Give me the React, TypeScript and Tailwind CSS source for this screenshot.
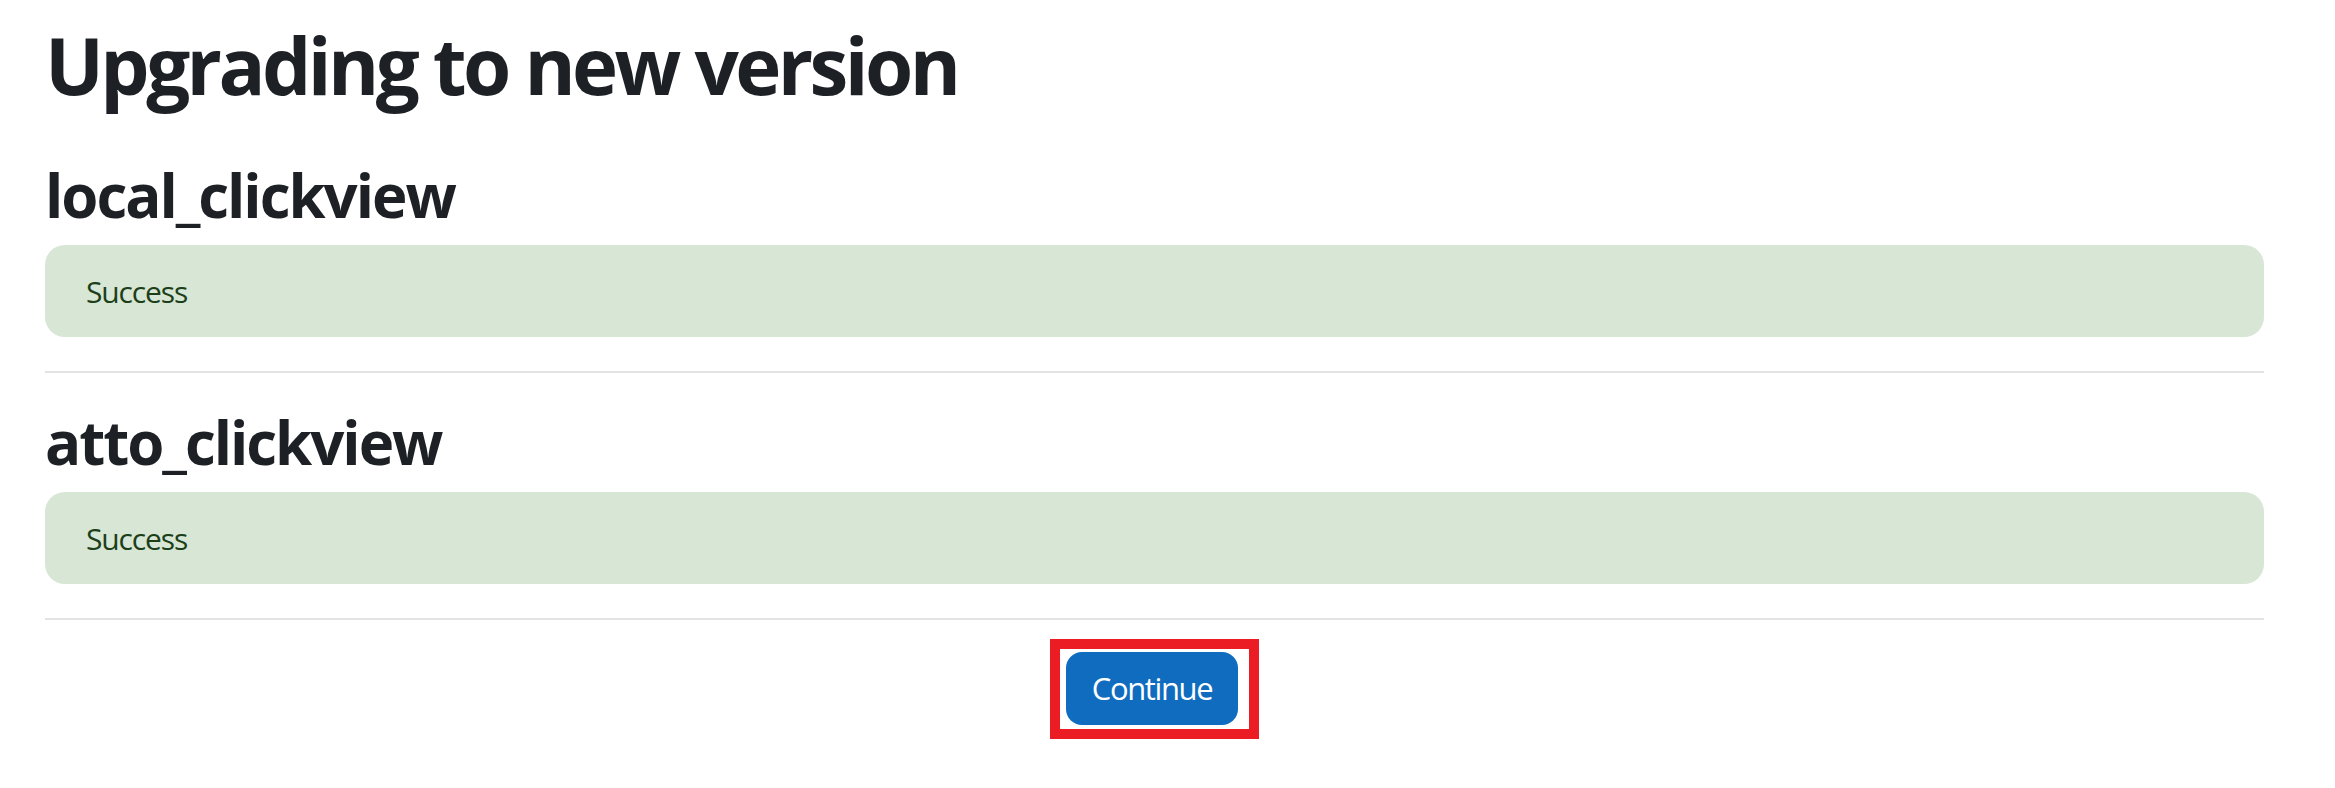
export default function App() {
  const results = [
    { name: 'local_clickview', status: 'Success' },
    { name: 'atto_clickview', status: 'Success' },
  ]

  return (
    <div className="min-h-screen bg-white pl-[45px] pr-[71px] pt-[18px] font-['Open_Sans',sans-serif] text-[#1d2125]">
      <h2 className="text-[78px] font-bold leading-[94px] tracking-[-0.046em]">Upgrading to new version</h2>

      {results.map((r, i) => (
        <div key={r.name} className={i === 0 ? 'mt-[47px]' : 'mt-[33px]'}>
          <h3 className="text-[60px] font-bold leading-[72px] tracking-[-0.034em]">{r.name}</h3>
          <div className="mt-[14px] rounded-[20px] bg-[#d7e6d5] pl-[41px] pt-[24px] pb-[23px] text-[30px] leading-[45px] tracking-[-0.038em] text-[#1c3f1a]">
            {r.status}
          </div>
          <div className="mt-[34px] h-[2px] bg-[#e3e3e3]" />
        </div>
      ))}

      {/* Continue button */}
      <div className="mt-[19px] flex justify-center">
        <div className="border-[10px] border-[#ec1c24] pt-[3px] pl-[6px] pr-[11px] pb-[4px]">
          <button className="flex h-[73px] w-[172px] items-center justify-center rounded-[16px] bg-[#0f6cbf] text-[31px] tracking-[-0.045em] text-white">
            Continue
          </button>
        </div>
      </div>
    </div>
  )
}
